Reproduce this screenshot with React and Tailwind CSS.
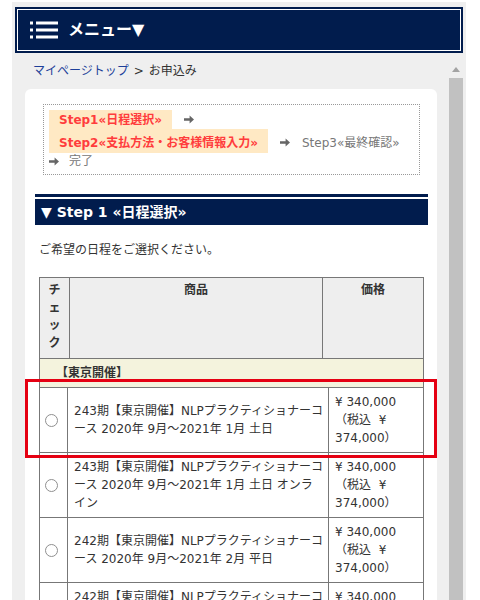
const NAVY = "bg-[#011c4d]";

const PRICE = "¥ 340,000 （税込\u00a0 ¥ 374,000）";

const COURSES = [
  { name: "243期【東京開催】NLPプラクティショナーコース 2020年 9月～2021年 1月 土日" },
  { name: "243期【東京開催】NLPプラクティショナーコース 2020年 9月～2021年 1月 土日 オンライン" },
  { name: "242期【東京開催】NLPプラクティショナーコース 2020年 9月～2021年 2月 平日" },
  { name: "242期【東京開催】NLPプラクティショナーコース 2020年 9月～2021年 2月 平日 オンライン" },
];

function MenuIcon() {
  return (
    <svg width="28" height="18" viewBox="0 0 28 18" fill="#fff">
      <rect x="0" y="0.5" width="3" height="3" />
      <rect x="6" y="0.5" width="22" height="3" />
      <rect x="0" y="7.5" width="3" height="3" />
      <rect x="6" y="7.5" width="22" height="3" />
      <rect x="0" y="14.5" width="3" height="3" />
      <rect x="6" y="14.5" width="22" height="3" />
    </svg>
  );
}

function Arrow({ className = "" }) {
  return (
    <svg width="10" height="9" viewBox="0 0 10 9" className={`shrink-0 ${className}`} fill="#666">
      <path d="M0 3.3h5.6V0.4L10 4.5 5.6 8.6V5.7H0z" />
    </svg>
  );
}

function Radio() {
  return <span className="block h-[13px] w-[13px] rounded-full border border-[#8f8f8f] bg-white" />;
}

export default function App() {
  return (
    <div className="relative h-[600px] w-[480px] overflow-hidden bg-white font-[family-name:'DejaVu_Sans','Noto_Sans_CJK_JP',sans-serif] text-[12px] text-[#333] [line-break:loose]">
      <div className="ml-[12px] mt-[2px] flex h-[598px] w-[454px] flex-col bg-[#efefef]">
        {/* Menu bar */}
        <header className={`mx-[3px] mt-[5px] h-[46px] shrink-0 p-[2px] ${NAVY}`}>
          <div className="flex h-full items-center border border-white pl-[12px]">
            <MenuIcon />
            <span className="ml-[10px] text-[16px] font-bold text-white">メニュー▼</span>
          </div>
        </header>

        <div className="flex min-h-0 flex-1">
          <div className="w-[425px] pl-[13px]">
            {/* Breadcrumb */}
            <div className="flex h-[36px] items-center pl-[8px]">
              <span className="text-[#1d3f99]">マイページトップ</span>
              <span className="ml-[5px]">&gt;</span>
              <span className="ml-[5px]">お申込み</span>
            </div>

            {/* Card */}
            <div className="h-[600px] w-[412px] rounded-t-[6px] bg-white pt-[15px]">
              {/* Steps */}
              <div className="ml-[18px] flex w-[377px] flex-wrap items-center border border-dotted border-[#999] p-[5px]">
                <span className="flex items-center">
                  <span className="flex h-[19px] items-center bg-[#ffe9c4] px-[10px] font-bold text-[#ff3c3c]">Step1«日程選択»</span>
                  <Arrow className="mx-[12px]" />
                </span>
                <span className="flex items-center">
                  <span className="flex h-[24px] items-center bg-[#ffe9c4] px-[10px] pt-[3px] font-bold text-[#ff3c3c]">Step2«支払方法・お客様情報入力»</span>
                  <Arrow className="mx-[12px] mt-[3px]" />
                </span>
                <span className="pt-[3px] text-[#777]">Step3«最終確認»</span>
                <span className="flex h-[16px] items-center">
                  <Arrow />
                  <span className="ml-[10px] text-[#777]">完了</span>
                </span>
              </div>

              {/* Section title */}
              <div className="ml-[10px] mt-[19px] w-[393px] border-t-[3px] border-[#011c4d] pt-[2px]">
                <div className={`flex h-[26px] items-center pl-[6px] text-[14px] font-bold text-white ${NAVY}`}>
                  ▼ Step 1 «日程選択»
                </div>
              </div>

              <p className="ml-[14px] mt-[16px] leading-[18px]">ご希望の日程をご選択ください。</p>

              {/* Table */}
              <div className="ml-[14px] mt-[18px] w-[385px] border-l border-t border-[#777] leading-[18px]">
                <div className="grid h-[81px] grid-cols-[30px_253px_101px] bg-[#eeeeee] font-bold leading-[17.5px]">
                  <div className="border-b border-r border-[#777] px-[3px] pt-[4px] text-center">チェック</div>
                  <div className="border-b border-r border-[#777] pt-[4px] text-center">商品</div>
                  <div className="border-b border-r border-[#777] pt-[4px] text-center">価格</div>
                </div>
                <div className="flex h-[29px] items-center border-b border-r border-[#777] bg-[#f4f3dd] pl-[16px] font-bold">
                  【東京開催】
                </div>
                {COURSES.map((c, i) => (
                  <div key={i} className="grid grid-cols-[28px_261px_95px]">
                    <div className="flex items-center border-b border-r border-[#777] pl-[5px]">
                      <Radio />
                    </div>
                    <div className="flex items-center border-b border-r border-[#777] py-[5px] pl-[6px] pr-[4px]">
                      {c.name}
                    </div>
                    <div className="border-b border-r border-[#777] py-[5px] pl-[6px] pr-[4px]">{PRICE}</div>
                  </div>
                ))}
              </div>
            </div>
          </div>

          <div className="flex-1" />

          {/* Scrollbar */}
          <div className="w-[17px] pt-[8px]">
            <div className="flex h-[17px] w-[14px] items-start justify-center pt-[6px]">
              <svg width="8" height="5" viewBox="0 0 8 5" fill="#a3a3a3">
                <path d="M4 0L8 5H0z" />
              </svg>
            </div>
            <div className="h-[600px] w-[14px] bg-[#c1c1c1]" />
          </div>
        </div>
      </div>

      {/* Highlight */}
      <div className="absolute left-[25px] top-[379px] h-[79px] w-[412px] border-[3px] border-[#e50012]" />
    </div>
  );
}
